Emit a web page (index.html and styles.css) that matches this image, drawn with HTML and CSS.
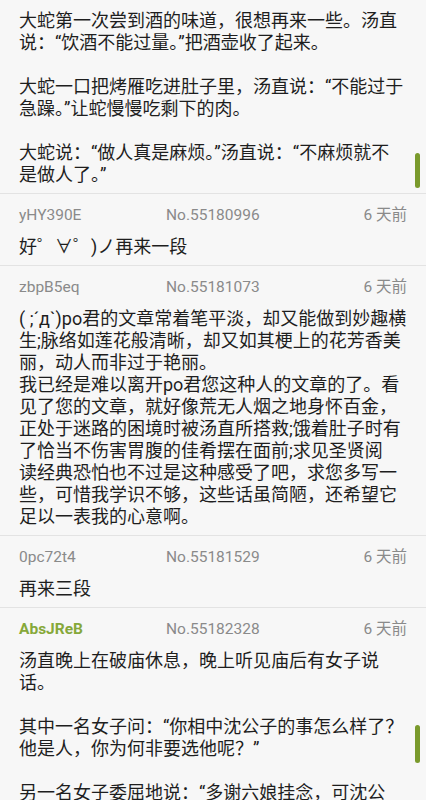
FILE: index.html
```html
<!DOCTYPE html>
<html lang="zh-CN">

<head>
    <meta charset="UTF-8">
    <meta name="viewport" content="width=device-width, initial-scale=1.0">
    <title>回复</title>
    <link rel="stylesheet" href="styles.css">
</head>

<body>

    <div class="thread">

        <!-- previous reply, scrolled partly out of view -->
        <div class="reply reply-top">
            <div class="content">大蛇第一次尝到酒的味道，很想再来一些。汤直说：“饮酒不能过量。”把酒壶收了起来。<br><br>大蛇一口把烤雁吃进肚子里，汤直说：“不能过于急躁。”让蛇慢慢吃剩下的肉。<br><br>大蛇说：“做人真是麻烦。”汤直说：“不麻烦就不是做人了。”</div>
            <span class="scroll-thumb thumb-a"></span>
        </div>

        <div class="reply">
            <div class="meta">
                <span class="user">yHY390E</span>
                <span class="no">No.55180996</span>
                <span class="time">6 天前</span>
            </div>
            <div class="content">好゜∀゜)ノ再来一段</div>
        </div>

        <div class="reply">
            <div class="meta">
                <span class="user">zbpB5eq</span>
                <span class="no">No.55181073</span>
                <span class="time">6 天前</span>
            </div>
            <div class="content">( ;´д`)po君的文章常着笔平淡，却又能做到妙趣横生;脉络如莲花般清晰，却又如其梗上的花芳香美丽，动人而非过于艳丽。<br>我已经是难以离开po君您这种人的文章的了。看见了您的文章，就好像荒无人烟之地身怀百金，正处于迷路的困境时被汤直所搭救;饿着肚子时有了恰当不伤害胃腹的佳肴摆在面前;求见圣贤阅<br>读经典恐怕也不过是这种感受了吧，求您多写一些，可惜我学识不够，这些话虽简陋，还希望它足以一表我的心意啊。</div>
        </div>

        <div class="reply">
            <div class="meta">
                <span class="user">0pc72t4</span>
                <span class="no">No.55181529</span>
                <span class="time">6 天前</span>
            </div>
            <div class="content">再来三段</div>
        </div>

        <div class="reply">
            <div class="meta">
                <span class="user po">AbsJReB</span>
                <span class="no">No.55182328</span>
                <span class="time">6 天前</span>
            </div>
            <div class="content">汤直晚上在破庙休息，晚上听见庙后有女子说话。<br><br>其中一名女子问：“你相中沈公子的事怎么样了？他是人，你为何非要选他呢？”<br><br>另一名女子委屈地说：“多谢六娘挂念，可沈公<br>子待我极好，我是真心喜欢他的。”</div>
            <span class="scroll-thumb thumb-b"></span>
        </div>

    </div>

</body>

</html>
```

FILE: styles.css
```css
body {
    font-family: Roboto, "Noto Sans CJK SC", sans-serif;
    background-color: #f7f7f7;
    margin: 0;
    padding: 0;
}

.thread {
    height: 800px;
    overflow: hidden;
}

.reply {
    position: relative;
    padding: 11px 19px 7px;
    border-bottom: 1px solid #e3e3e3;
}

.reply-top {
    padding-top: 10px;
}

.meta {
    display: grid;
    grid-template-columns: 147px 1fr auto;
    font-size: 15.5px;
    line-height: 20px;
    color: #8a8a8a;
    margin-bottom: 11px;
}

.user.po {
    color: #86a83a;
    font-weight: bold;
}

.time {
    text-align: right;
}

.content {
    font-size: 18px;
    line-height: 22px;
    color: #1e1e1e;
}

.scroll-thumb {
    position: absolute;
    right: 6px;
    width: 5px;
    border-radius: 3px;
    background-color: #7a9a2c;
}

.thumb-a {
    top: 153px;
    height: 35px;
}

.thumb-b {
    top: 117px;
    height: 38px;
}
```
